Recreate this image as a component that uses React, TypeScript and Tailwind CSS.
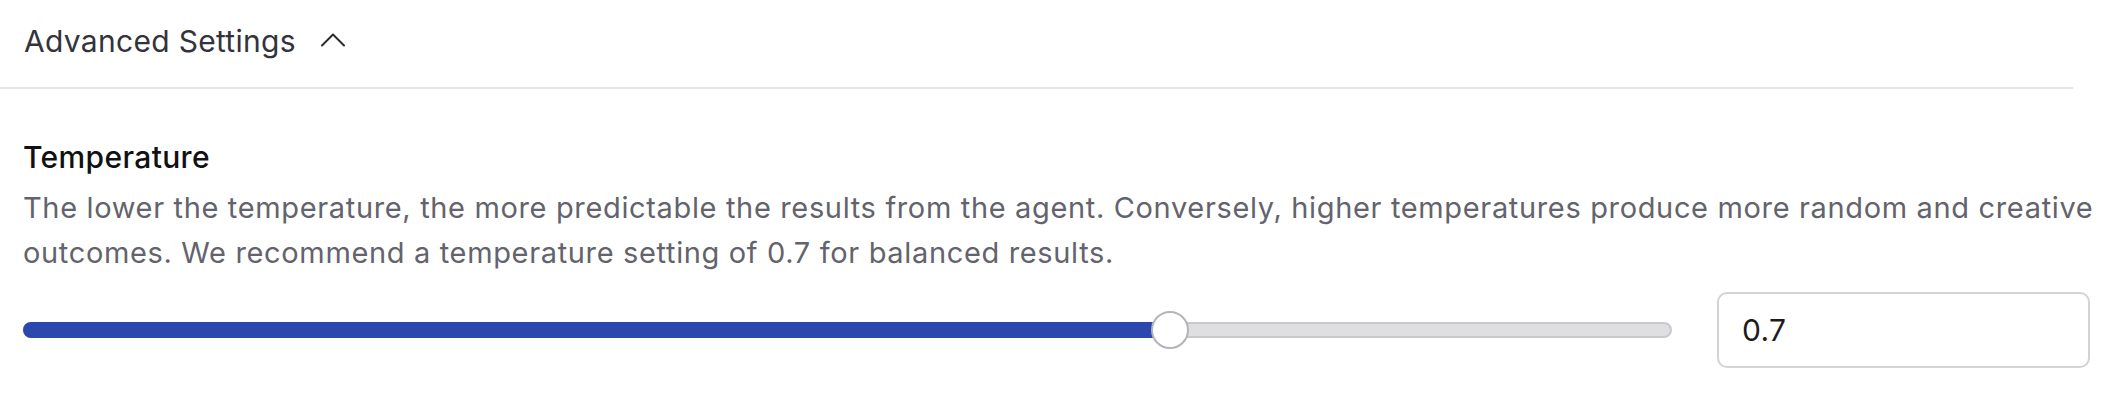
export default function App() {
    const value = 0.7;

    return (
        <div className="w-[2122px] h-[410px] bg-white font-['Inter','Liberation_Sans',sans-serif]">
            {/* Header */}
            <div className="w-[2073px] h-[89px] border-b-2 border-[#e6e6e8] flex items-center gap-[24px] pl-[24px] pb-[6px]">
                <span className="text-[30px] leading-[36px] text-[#33333d] tracking-[0.3px]">Advanced Settings</span>
                <svg width="26" height="14" viewBox="0 0 26 14" fill="none" className="mt-[-2px]">
                    <path d="M2 12.5 L13 1.5 L24 12.5" stroke="#2a2a30" strokeWidth="2" strokeLinecap="round" strokeLinejoin="round" />
                </svg>
            </div>

            {/* Temperature */}
            <div className="pl-[23px] pr-[32px] pt-[50px]">
                <h3 className="text-[30px] leading-[36px] font-medium text-[#111114] tracking-[0.35px]">Temperature</h3>
                <p className="mt-[10px] text-[29px] leading-[45px] text-[#63636d] whitespace-nowrap tracking-[0.65px]">
                    The lower the temperature, the more predictable the results from the agent. Conversely, higher temperatures produce more random and creative
                    <br />
                    outcomes. We recommend a temperature setting of 0.7 for balanced results.
                </p>

                <div className="mt-[17px] flex items-center gap-[45px]">
                    <div className="relative flex-1 h-[16px]">
                        <div className="absolute inset-0 rounded-full bg-[#dfdfe2] border-2 border-[#c9c9cd]"></div>
                        <div
                            className="absolute left-0 top-0 h-[16px] rounded-l-full bg-[#2c48ae]"
                            style={{ width: `calc(19px + (100% - 38px) * ${value})` }}
                        ></div>
                        <div
                            className="absolute top-1/2 -translate-y-1/2 w-[38px] h-[38px] rounded-full bg-white border-2 border-[#b4b4b8]"
                            style={{ left: `calc((100% - 38px) * ${value})` }}
                        ></div>
                    </div>
                    <div className="w-[373px] h-[76px] rounded-[10px] border-2 border-[#d3d3d7] flex items-center pl-[23px]">
                        <span className="text-[30px] text-[#1b1b1f] tracking-[0.3px]">{value}</span>
                    </div>
                </div>
            </div>
        </div>
    );
}
